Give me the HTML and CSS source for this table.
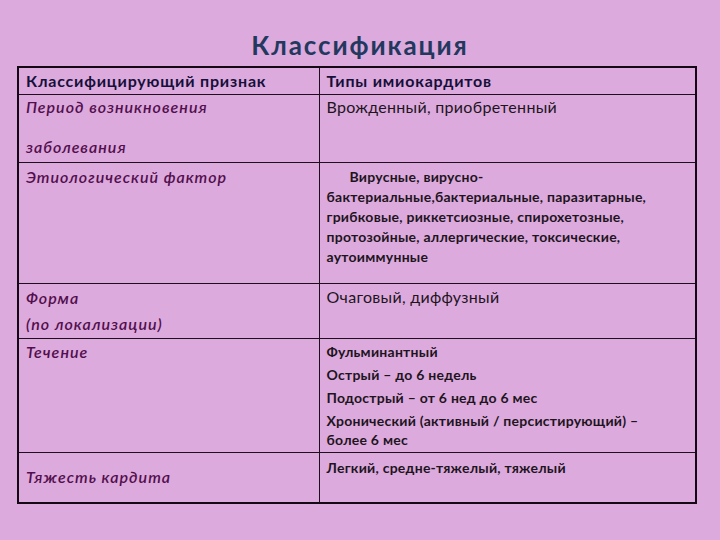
FILE: index.html
```html
<!DOCTYPE html>
<html lang="ru">
<head>
<meta charset="utf-8">
<title>Классификация</title>
<link rel="stylesheet" href="styles.css">
</head>
<body>
<div class="page">
  <h1 class="title">Классификация</h1>
  <table class="grid">
    <colgroup><col class="c1"><col class="c2"></colgroup>
    <tr class="r-head">
      <th>Классифицирующий признак</th>
      <th>Типы имиокардитов</th>
    </tr>
    <tr class="r1">
      <td class="key"><div>Период возникновения</div><div class="gap-lg">заболевания</div></td>
      <td class="val">Врожденный, приобретенный</td>
    </tr>
    <tr class="r2">
      <td class="key">Этиологический фактор</td>
      <td class="val bold"><div class="indent">Вирусные, вирусно-</div>бактериальные,бактериальные, паразитарные, грибковые, риккетсиозные, спирохетозные, протозойные, аллергические, токсические, аутоиммунные</td>
    </tr>
    <tr class="r3">
      <td class="key"><div>Форма</div><div class="gap-sm">(по локализации)</div></td>
      <td class="val">Очаговый, диффузный</td>
    </tr>
    <tr class="r4">
      <td class="key">Течение</td>
      <td class="val bold list">
        <p>Фульминантный</p>
        <p>Острый – до 6 недель</p>
        <p>Подострый – от 6 нед до 6 мес</p>
        <p>Хронический (активный / персистирующий) – более 6 мес</p>
      </td>
    </tr>
    <tr class="r5">
      <td class="key mid">Тяжесть кардита</td>
      <td class="val bold">Легкий, средне-тяжелый, тяжелый</td>
    </tr>
  </table>
</div>
</body>
</html>
```

FILE: styles.css
```css
html, body {
  margin: 0;
  padding: 0;
  background: #dcaadc;
}
.page {
  width: 720px;
  height: 540px;
  padding-top: 30px;
  box-sizing: border-box;
  font-family: Lato, "Liberation Sans", sans-serif;
}
.title {
  margin: 0 0 6px 0;
  height: 30px;
  line-height: 30px;
  text-align: center;
  font-size: 26px;
  font-weight: 700;
  letter-spacing: 1.9px;
  color: #23385e;
}
.grid {
  margin-left: 17px;
  width: 680px;
  border-collapse: collapse;
  border: 2px solid #140814;
  table-layout: fixed;
}
.c1 { width: 301px; }
.grid th, .grid td {
  border: 1px solid #1e0e1e;
  vertical-align: top;
  text-align: left;
  padding: 4px 14px 0 7px;
  font-size: 16px;
  line-height: 18px;
}
.grid th {
  font-weight: 700;
  color: #150f3a;
  padding-top: 4px;
  letter-spacing: 0.8px;
}
.r-head { height: 27px; }
.r1 { height: 68px; }
.r2 { height: 121px; }
.r3 { height: 55px; }
.r4 { height: 114px; }
.r5 { height: 51px; }
.r1 td { padding-top: 3px; }
.r2 .key, .r3 .key { padding-top: 5px; }
.key {
  font-style: italic;
  color: #520e4e;
  font-weight: 600;
  letter-spacing: 1px;
}
.key.mid { vertical-align: middle; padding-top: 0; padding-bottom: 1px; }
.val {
  color: #1e141e;
  letter-spacing: 0.3px;
}
.val.bold {
  font-weight: 700;
  font-size: 14px;
  line-height: 20px;
  letter-spacing: 0.25px;
}
.indent { padding-left: 23px; }
.gap-lg { margin-top: 22px; }
.gap-sm { margin-top: 8px; }
.list { padding-top: 0; }
.list p {
  margin: 0 0 4px 0;
  line-height: 19px;
}
.list p:first-child { margin-top: -1px; }
.list p:last-child { margin-bottom: 0; }
.r5 .val { padding-top: 5px; }
```
